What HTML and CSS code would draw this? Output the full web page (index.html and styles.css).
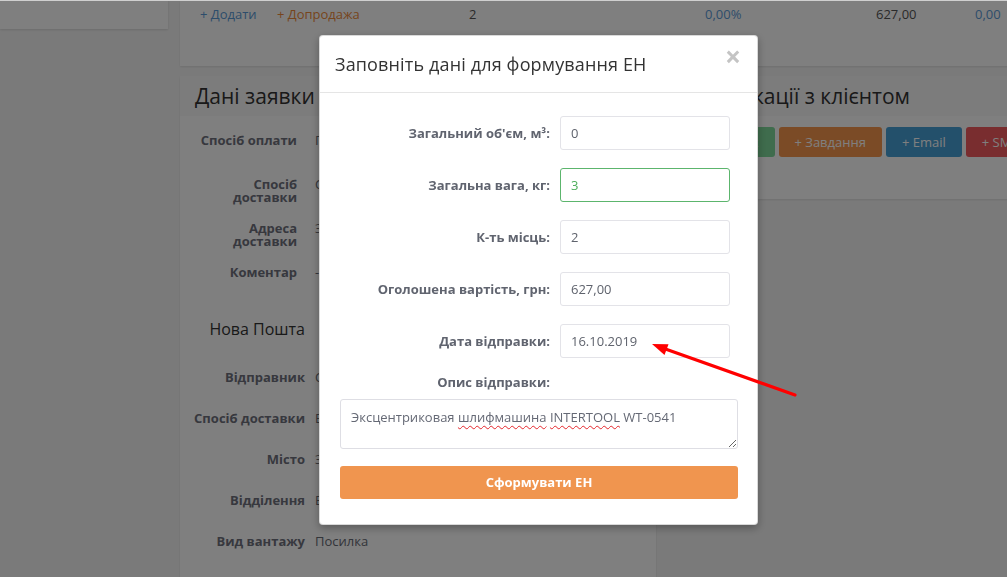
FILE: index.html
```html
<!DOCTYPE html>
<html lang="uk">
<head>
<meta charset="utf-8">
<title>Заявка</title>
<link rel="stylesheet" href="styles.css">
</head>
<body>
<div class="page">
  <aside class="sidebar">
    <div class="side-card"></div>
  </aside>
  <main class="main">
    <section class="card totals">
      <div class="totals-row">
        <span class="link-blue">+ Додати</span>
        <span class="link-orange">+ Допродажа</span>
        <span class="num">2</span>
        <span class="num blue">0,00%</span>
        <span class="num">627,00</span>
        <span class="num blue">0,00</span>
      </div>
    </section>
    <div class="cards-row">
      <section class="card order">
        <header class="card-header"><h2>Дані заявки</h2></header>
        <div class="order-body">
          <div class="grp1">
            <div class="irow"><span class="lbl">Спосіб оплати</span><span class="val">Післяплата</span></div>
            <div class="irow"><span class="lbl">Спосіб доставки</span><span class="val">Самовивіз</span></div>
            <div class="irow"><span class="lbl">Адреса доставки</span><span class="val">Запоріжжя</span></div>
            <div class="irow"><span class="lbl">Коментар</span><span class="val">-</span></div>
          </div>
          <div class="grp2">
            <div class="np-title">Нова Пошта</div>
            <div class="irow2"><span class="lbl">Відправник</span><span class="val">Сидоренко Олег</span></div>
            <div class="irow2"><span class="lbl">Спосіб доставки</span><span class="val">Відділення-Відділення</span></div>
            <div class="irow2"><span class="lbl">Місто</span><span class="val">Запоріжжя</span></div>
            <div class="irow2"><span class="lbl">Відділення</span><span class="val">Відділення №1</span></div>
            <div class="irow2"><span class="lbl">Вид вантажу</span><span class="val">Посилка</span></div>
          </div>
        </div>
      </section>
      <section class="card comm">
        <header class="card-header"><h2>Комунікації з клієнтом</h2></header>
        <div class="comm-body">
          <span class="btn green">+ Дзвінок</span>
          <span class="btn orange">+ Завдання</span>
          <span class="btn blue">+ Email</span>
          <span class="btn red">+ SMS</span>
        </div>
      </section>
    </div>
  </main>
</div>

<div class="backdrop"></div>
<div class="topline"></div>

<div class="modal">
  <div class="modal-header">
    <h4 class="modal-title">Заповніть дані для формування ЕН</h4>
    <span class="close">×</span>
  </div>
  <div class="modal-body">
    <div class="field"><label>Загальний об'єм, м³:</label><div class="input">0</div></div>
    <div class="field"><label>Загальна вага, кг:</label><div class="input ok">3</div></div>
    <div class="field"><label>К-ть місць:</label><div class="input">2</div></div>
    <div class="field"><label>Оголошена вартість, грн:</label><div class="input">627,00</div></div>
    <div class="field"><label>Дата відправки:</label><div class="input">16.10.2019</div></div>
    <div class="field desc"><label>Опис відправки:</label></div>
    <div class="textarea">Эксцентриковая <span class="sp">шлифмашина</span> <span class="sp">INTERTOOL</span> WT-0541</div>
    <div class="submit">Сформувати ЕН</div>
  </div>
</div>

<svg class="annot" width="1007" height="577" viewBox="0 0 1007 577">
  <line x1="795" y1="395" x2="664" y2="348.5" stroke="#f00" stroke-width="3.2" stroke-linecap="round"/>
  <polygon points="652,344 668.5,344.2 664.5,355" fill="#f00"/>
</svg>
</body>
</html>
```

FILE: styles.css
```css
* { box-sizing: border-box; }

html, body {
  margin: 0;
  width: 1007px;
  height: 577px;
  overflow: hidden;
}

body {
  font-family: "Open Sans", "Noto Sans", sans-serif;
  font-size: 13px;
  color: #555;
  background: #f5f5f5;
}

h2, h4 { margin: 0; font-weight: 400; }

.page {
  display: flex;
  gap: 12px;
  width: 1200px;
}

.sidebar { width: 168px; flex: none; }

.side-card {
  height: 29px;
  background: #fff;
  box-shadow: 0 1px 2px rgba(0,0,0,.12);
}

.main {
  display: flex;
  flex-direction: column;
  gap: 10px;
  flex: none;
  width: 1000px;
}

.card {
  background: #fff;
  box-shadow: 0 1px 2px rgba(0,0,0,.1);
}

.totals {
  height: 66px;
  padding-left: 20px;
}

.totals-row {
  display: grid;
  grid-template-columns: 77px 192px 236px 171px 99px 60px;
  line-height: 28px;
}

.link-blue, .blue { color: #5b9ad6; }
.link-orange { color: #ee8a3a; }
.num { color: #555; }
.num.blue { color: #5b9ad6; }

.cards-row {
  display: flex;
  gap: 12px;
  align-items: flex-start;
}

.card-header {
  height: 40px;
  padding: 0 15px;
  display: flex;
  align-items: center;
  background: #f8f8f8;
}

.card-header h2 {
  font-size: 21px;
  color: #333;
  line-height: 26px;
}

.order {
  width: 476px;
  height: 560px;
  flex: none;
}

.order-body { padding-top: 18px; }

.lbl {
  font-weight: 700;
  color: #6e707c;
  text-align: right;
}

.val { color: #666a74; white-space: nowrap; }

.irow {
  display: grid;
  grid-template-columns: 117px 1fr;
  column-gap: 18px;
  height: 44px;
  align-items: start;
  line-height: 13px;
}

.irow .lbl { padding-left: 15px; }

.np-title {
  width: 125px;
  text-align: right;
  font-size: 16px;
  line-height: 22px;
  color: #333;
  margin: 8px 0 16px;
}

.irow2 {
  display: grid;
  grid-template-columns: 125px 1fr;
  column-gap: 10px;
  height: 41px;
  align-items: center;
  line-height: 18px;
}

.comm {
  width: 360px;
  flex: none;
}

.comm-body {
  padding: 11px 15px 42px;
  display: flex;
  gap: 4px;
}

.btn {
  height: 30px;
  line-height: 30px;
  padding: 0 16px;
  border-radius: 3px;
  color: #fff;
  white-space: nowrap;
}

.btn.green { background: #7ed99a; }
.btn.orange { background: #f7964c; }
.btn.blue { background: #47a0d6; }
.btn.red { background: #f25a5e; }

.backdrop {
  position: fixed;
  inset: 0;
  background: rgba(0,0,0,.5);
}

.topline {
  position: fixed;
  left: 0;
  top: 0;
  width: 100%;
  height: 1px;
  background: #cfcfcf;
}

.modal {
  position: fixed;
  left: 319px;
  top: 35px;
  width: 439px;
  background: #fff;
  border: 1px solid rgba(0,0,0,.15);
  border-radius: 4px;
  box-shadow: 0 3px 9px rgba(0,0,0,.3);
}

.modal-header {
  display: flex;
  justify-content: space-between;
  align-items: flex-start;
  padding: 15px 16px 15px 15px;
  border-bottom: 1px solid #e5e5e5;
}

.modal-title {
  font-size: 18px;
  line-height: 26px;
  letter-spacing: 0.15px;
  color: #333;
}

.close {
  font-size: 28px;
  font-weight: 700;
  line-height: 1;
  color: #c4c4c4;
  margin-top: -9px;
}

.modal-body {
  padding: 23px 19px 25px 20px;
}

.field {
  display: grid;
  grid-template-columns: 210px 170px;
  column-gap: 10px;
  align-items: center;
  margin-bottom: 18px;
}

.field label {
  text-align: right;
  font-weight: 700;
  color: #60646f;
}

.input {
  height: 34px;
  line-height: 32px;
  padding: 0 10px;
  border: 1px solid #e3e3e8;
  border-radius: 3px;
  color: #5f636d;
}

.input.ok {
  border-color: #5cb56d;
  color: #4cae5a;
}

.field.desc {
  margin: -3px 0 8px;
  line-height: 18px;
}

.textarea {
  height: 50px;
  padding: 8px 10px;
  line-height: 18px;
  border: 1px solid #dedee4;
  border-radius: 3px;
  color: #656975;
  overflow: auto;
  resize: vertical;
}

.sp {
  text-decoration: underline wavy #e5262b;
  text-decoration-thickness: 1px;
  text-underline-offset: 3px;
}

.submit {
  margin-top: 17px;
  height: 33px;
  line-height: 33px;
  text-align: center;
  background: #f0954f;
  border-radius: 3px;
  color: #fff;
  font-weight: 700;
}

.annot {
  position: fixed;
  left: 0;
  top: 0;
  pointer-events: none;
}
```
